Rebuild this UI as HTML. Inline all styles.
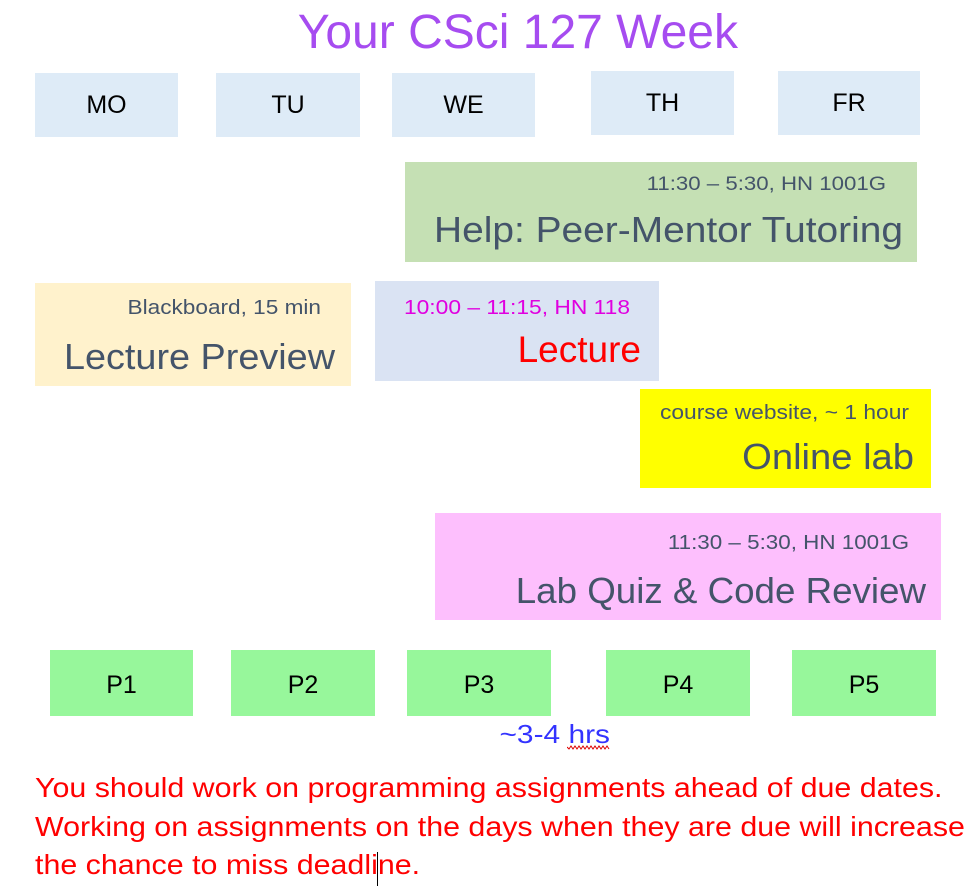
<!DOCTYPE html>
<html><head><meta charset="utf-8"><style>
body{margin:0;width:977px;height:895px;background:#fff;position:relative;overflow:hidden;font-family:"Liberation Sans",sans-serif}
.b{position:absolute}
.t{position:absolute;white-space:nowrap;transform-origin:right center}
.c{position:absolute;white-space:nowrap;display:flex;align-items:center;justify-content:center}
.day{background:#deebf7;font-size:25px;color:#000}
.p{background:#97f79b;font-size:25px;color:#000;padding-top:4px;box-sizing:border-box}
.g{color:#44546a}
</style></head><body>
<div class="t" style="left:0;width:738px;text-align:right;top:5px;font-size:48px;color:#a64cf0">Your CSci 127 Week</div>

<div class="c day" style="left:35px;top:73px;width:143px;height:64px">MO</div>
<div class="c day" style="left:216px;top:73px;width:144px;height:64px">TU</div>
<div class="c day" style="left:392px;top:73px;width:143px;height:64px">WE</div>
<div class="c day" style="left:591px;top:71px;width:143px;height:64px">TH</div>
<div class="c day" style="left:778px;top:71px;width:142px;height:64px">FR</div>

<div class="b" style="left:405px;top:162px;width:512px;height:100px;background:#c5e0b4"></div>
<div class="t g" style="left:0;width:886px;text-align:right;top:174px;font-size:19px;transform:scaleX(1.17)">11:30 – 5:30, HN 1001G</div>
<div class="t g" style="left:0;width:903px;text-align:right;top:209px;font-size:36px;transform:scaleX(1.08)">Help: Peer-Mentor Tutoring</div>

<div class="b" style="left:35px;top:283px;width:316px;height:103px;background:#fff2cc"></div>
<div class="t g" style="left:0;width:321px;text-align:right;top:297px;font-size:20px;transform:scaleX(1.13)">Blackboard, 15 min</div>
<div class="t g" style="left:0;width:335px;text-align:right;top:336px;font-size:36px;transform:scaleX(1.05)">Lecture Preview</div>

<div class="b" style="left:375px;top:281px;width:284px;height:100px;background:#dae3f3"></div>
<div class="t" style="left:0;width:630px;text-align:right;top:297px;font-size:20px;color:#e000e0;transform:scaleX(1.14)">10:00 – 11:15, HN 118</div>
<div class="t" style="left:0;width:641px;text-align:right;top:329px;font-size:37px;color:#ff0000">Lecture</div>

<div class="b" style="left:640px;top:389px;width:291px;height:99px;background:#ffff00"></div>
<div class="t g" style="left:0;width:909px;text-align:right;top:402px;font-size:20px;transform:scaleX(1.14)">course website, ~ 1 hour</div>
<div class="t g" style="left:0;width:914px;text-align:right;top:436px;font-size:36px;transform:scaleX(1.06)">Online lab</div>

<div class="b" style="left:435px;top:513px;width:506px;height:107px;background:#fdbffd"></div>
<div class="t g" style="left:0;width:909px;text-align:right;top:532px;font-size:20px;transform:scaleX(1.12)">11:30 – 5:30, HN 1001G</div>
<div class="t g" style="left:0;width:926px;text-align:right;top:570px;font-size:36px;transform:scaleX(1.02)">Lab Quiz &amp; Code Review</div>

<div class="c p" style="left:50px;top:650px;width:143px;height:66px">P1</div>
<div class="c p" style="left:231px;top:650px;width:144px;height:66px">P2</div>
<div class="c p" style="left:407px;top:650px;width:144px;height:66px">P3</div>
<div class="c p" style="left:606px;top:650px;width:144px;height:66px">P4</div>
<div class="c p" style="left:792px;top:650px;width:144px;height:66px">P5</div>

<div class="t" style="left:0;width:610px;text-align:right;top:719px;font-size:26px;color:#3333ff;transform:scaleX(1.15)">~3-4 hrs</div>
<svg class="b" style="left:567px;top:745px" width="44" height="5"><path d="M0 2 L2 4 L4 1 L6 4 L8 1 L10 4 L12 1 L14 4 L16 1 L18 4 L20 1 L22 4 L24 1 L26 4 L28 1 L30 4 L32 1 L34 4 L36 1 L38 4 L40 1 L42 4" stroke="#d00" fill="none" stroke-width="1"/></svg>

<div class="t" style="left:35px;top:769px;font-size:28px;color:#ff0000;transform-origin:left center;line-height:38.5px;transform:scaleX(1.085)">You should work on programming assignments ahead of due dates.<br>Working on assignments on the days when they are due will increase<br>the chance to miss deadline.</div>
<div class="b" style="left:377px;top:852px;width:1px;height:34px;background:#000"></div>
</body></html>
